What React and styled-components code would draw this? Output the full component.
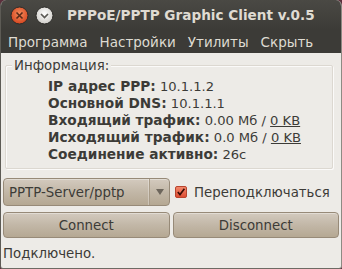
import React from "react";
import styled, { createGlobalStyle } from "styled-components";

const GlobalStyle = createGlobalStyle`
  html, body {
    margin: 0;
    padding: 0;
    background: #5c2f3c;
  }
  #root {
    width: 342px;
    height: 269px;
  }
`;

const Window = styled.div`
  width: 342px;
  height: 269px;
  display: flex;
  flex-direction: column;
  background: #edebe7;
  border-radius: 6px 6px 3px 3px;
  overflow: hidden;
  box-sizing: border-box;
  border-left: 1px solid #5d5b55;
  border-right: 1px solid #8d8a83;
  border-bottom: 1px solid #6e6b64;
  font-family: "DejaVu Sans", "Liberation Sans", sans-serif;
  font-size: 13.33px;
  color: #3c3b37;
`;

const TitleBar = styled.div`
  height: 30px;
  flex: none;
  display: flex;
  align-items: center;
  padding-left: 9px;
  gap: 6px;
  background: linear-gradient(#4a4944, #3c3b37);
`;

const Title = styled.div`
  margin-left: 7px;
  font-weight: bold;
  font-size: 13.6px;
  color: #dfdbd2;
  white-space: nowrap;
`;

const MenuBar = styled.div`
  height: 23px;
  flex: none;
  display: flex;
  align-items: center;
  padding-left: 1px;
  background: #3c3b37;
  color: #dfdbd2;
  font-size: 13.5px;
`;

const MenuItem = styled.span`
  padding: 0 6px;
  white-space: nowrap;
`;

const Body = styled.div`
  flex: 1;
  display: flex;
  flex-direction: column;
  padding: 5px 2px 0 2px;
`;

const Frame = styled.div`
  position: relative;
  margin: 7px 6px 0 2px;
  height: 102px;
  border: 1px solid #dcd8d1;
  box-shadow: inset 1px 1px 0 #fbfaf9, 1px 1px 0 #fbfaf9;
  border-radius: 2px;
  display: flex;
  padding-left: 42px;
`;

const FrameLabel = styled.div`
  position: absolute;
  top: -9px;
  left: 6px;
  padding: 0 2px;
  background: #edebe7;
  line-height: 17px;
`;

const InfoList = styled.div`
  margin-top: 12px;
  display: flex;
  flex-direction: column;
  line-height: 17px;
  font-size: 13.1px;
`;

const InfoRow = styled.div`
  height: 17px;
  white-space: nowrap;
  b {
    font-weight: bold;
    font-size: 13.7px;
  }
  u {
    text-decoration: underline;
  }
`;

const ControlRow = styled.div`
  margin-top: 9px;
  display: flex;
  align-items: center;
`;

const buttonSurface = `
  border: 1px solid #978a78;
  border-radius: 4px;
  background: linear-gradient(#d3cabe, #c2b7a7 50%, #b5a893);
  box-shadow: inset 0 1px 0 rgba(255, 255, 255, 0.35);
  box-sizing: border-box;
  color: #3c3b37;
  font-family: inherit;
  font-size: inherit;
`;

const Combo = styled.div`
  ${buttonSurface}
  width: 167px;
  height: 28px;
  display: flex;
  align-items: center;
`;

const ComboText = styled.span`
  flex: 1;
  padding-left: 5px;
  white-space: nowrap;
`;

const ComboArrow = styled.span`
  width: 19px;
  height: 100%;
  display: flex;
  align-items: center;
  justify-content: center;
  border-left: 1px solid #a99c89;
  box-shadow: -1px 0 0 rgba(255, 255, 255, 0.3);
`;

const Check = styled.label`
  display: flex;
  align-items: center;
  gap: 7px;
  margin-left: 5px;
  white-space: nowrap;
`;

const ButtonRow = styled.div`
  margin-top: 6px;
  display: grid;
  grid-template-columns: 1fr 1fr;
  gap: 3px;
`;

const Button = styled.button`
  ${buttonSurface}
  height: 26px;
  padding: 0;
  margin: 0;
`;

const Status = styled.div`
  margin-top: 8px;
`;

const CloseIcon = () => (
  <svg width="19" height="19" viewBox="0 0 19 19">
    <defs>
      <radialGradient id="cg" cx="50%" cy="40%" r="60%">
        <stop offset="0" stopColor="#f48c5c" />
        <stop offset="1" stopColor="#d5451f" />
      </radialGradient>
    </defs>
    <circle cx="9.5" cy="9.5" r="8.5" fill="url(#cg)" stroke="#2d2c29" />
    <path d="M6.5 6.5 L12.5 12.5 M12.5 6.5 L6.5 12.5" stroke="#5a2a18" strokeWidth="1.6" />
  </svg>
);

const MinIcon = () => (
  <svg width="19" height="19" viewBox="0 0 19 19">
    <defs>
      <radialGradient id="mg" cx="50%" cy="40%" r="60%">
        <stop offset="0" stopColor="#ffffff" />
        <stop offset="1" stopColor="#cfcdc8" />
      </radialGradient>
    </defs>
    <circle cx="9.5" cy="9.5" r="8.5" fill="url(#mg)" stroke="#2d2c29" />
    <path d="M6 8 L9.5 11.5 L13 8" fill="none" stroke="#5b5a55" strokeWidth="1.7" />
  </svg>
);

const ArrowIcon = () => (
  <svg width="8" height="6" viewBox="0 0 8 6">
    <path d="M0 0 H8 L4 6 Z" fill="#6d665c" />
  </svg>
);

const CheckIcon = () => (
  <svg width="12" height="12" viewBox="0 0 12 12">
    <defs>
      <linearGradient id="kg" x1="0" y1="0" x2="0" y2="1">
        <stop offset="0" stopColor="#f38a6e" />
        <stop offset="1" stopColor="#dc4a30" />
      </linearGradient>
    </defs>
    <rect x="0.5" y="0.5" width="11" height="11" rx="1.5" fill="url(#kg)" stroke="#b8452f" />
    <path d="M2.8 6 L5 8.6 L9.4 2.8" fill="none" stroke="#3a0d06" strokeWidth="1.6" />
  </svg>
);

const info = [
  { label: "IP адрес PPP:", value: "10.1.1.2" },
  { label: "Основной DNS:", value: "10.1.1.1" },
  { label: "Входящий трафик:", value: "0.00 Мб / ", link: "0 KB" },
  { label: "Исходящий трафик:", value: "0.0 Мб / ", link: "0 KB" },
  { label: "Соединение активно:", value: "26с" },
];

export default function App() {
  return (
    <>
      <GlobalStyle />
      <Window>
        <TitleBar>
          <CloseIcon />
          <MinIcon />
          <Title>PPPoE/PPTP Graphic Client v.0.5</Title>
        </TitleBar>
        <MenuBar>
          <MenuItem>Программа</MenuItem>
          <MenuItem>Настройки</MenuItem>
          <MenuItem>Утилиты</MenuItem>
          <MenuItem>Скрыть</MenuItem>
        </MenuBar>
        <Body>
          <Frame>
            <FrameLabel>Информация:</FrameLabel>
            <InfoList>
              {info.map((row) => (
                <InfoRow key={row.label}>
                  <b>{row.label}</b> {row.value}
                  {row.link && <u>{row.link}</u>}
                </InfoRow>
              ))}
            </InfoList>
          </Frame>
          <ControlRow>
            <Combo>
              <ComboText>PPTP-Server/pptp</ComboText>
              <ComboArrow>
                <ArrowIcon />
              </ComboArrow>
            </Combo>
            <Check>
              <CheckIcon />
              Переподключаться
            </Check>
          </ControlRow>
          <ButtonRow>
            <Button>Connect</Button>
            <Button>Disconnect</Button>
          </ButtonRow>
          <Status>Подключено.</Status>
        </Body>
      </Window>
    </>
  );
}
